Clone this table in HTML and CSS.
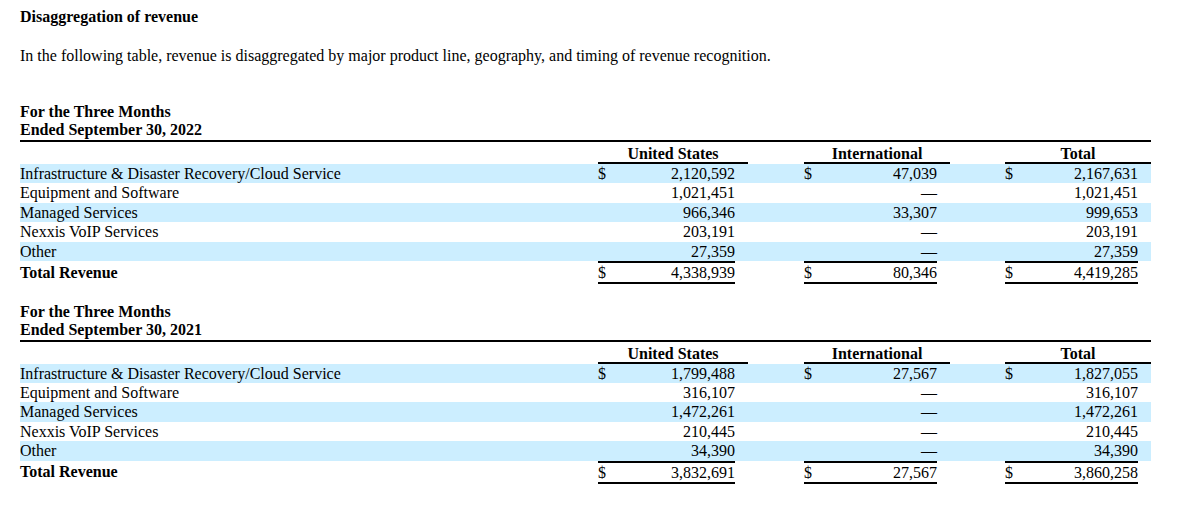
FILE: index.html
```html
<!DOCTYPE html>
<html lang="en">
<head>
<meta charset="utf-8">
<title>Disaggregation of revenue</title>
<link rel="stylesheet" href="styles.css">
</head>
<body>
<div class="page">
  <h1 class="heading">Disaggregation of revenue</h1>
  <p class="intro">In the following table, revenue is disaggregated by major product line, geography, and timing of revenue recognition.</p>

  <section class="period">
    <div class="period-title">For the Three Months<br>Ended September 30, 2022</div>
    <table class="rev">
      <colgroup>
        <col class="c-label"><col class="c-cur"><col class="c-val-us"><col class="c-pad"><col class="c-gap1">
        <col class="c-cur"><col class="c-val"><col class="c-pad"><col class="c-gap2">
        <col class="c-cur"><col class="c-val"><col class="c-pad">
      </colgroup>
      <thead>
        <tr class="head">
          <th></th><th class="grp" colspan="3">United States</th><th></th>
          <th class="grp" colspan="3">International</th><th></th>
          <th class="grp" colspan="3">Total</th>
        </tr>
      </thead>
      <tbody>
        <tr class="hl"><td class="label">Infrastructure &amp; Disaster Recovery/Cloud Service</td><td class="cur">$</td><td class="num">2,120,592</td><td></td><td></td><td class="cur">$</td><td class="num">47,039</td><td></td><td></td><td class="cur">$</td><td class="num">2,167,631</td><td></td></tr>
        <tr><td class="label">Equipment and Software</td><td></td><td class="num">1,021,451</td><td></td><td></td><td></td><td class="num">—</td><td></td><td></td><td></td><td class="num">1,021,451</td><td></td></tr>
        <tr class="hl"><td class="label">Managed Services</td><td></td><td class="num">966,346</td><td></td><td></td><td></td><td class="num">33,307</td><td></td><td></td><td></td><td class="num">999,653</td><td></td></tr>
        <tr><td class="label">Nexxis VoIP Services</td><td></td><td class="num">203,191</td><td></td><td></td><td></td><td class="num">—</td><td></td><td></td><td></td><td class="num">203,191</td><td></td></tr>
        <tr class="hl"><td class="label">Other</td><td></td><td class="num">27,359</td><td></td><td></td><td></td><td class="num">—</td><td></td><td></td><td></td><td class="num">27,359</td><td></td></tr>
        <tr class="total"><td class="label">Total Revenue</td><td class="cur u">$</td><td class="num u">4,338,939</td><td></td><td></td><td class="cur u">$</td><td class="num u">80,346</td><td></td><td></td><td class="cur u">$</td><td class="num u">4,419,285</td><td></td></tr>
      </tbody>
    </table>
  </section>

  <section class="period">
    <div class="period-title">For the Three Months<br>Ended September 30, 2021</div>
    <table class="rev">
      <colgroup>
        <col class="c-label"><col class="c-cur"><col class="c-val-us"><col class="c-pad"><col class="c-gap1">
        <col class="c-cur"><col class="c-val"><col class="c-pad"><col class="c-gap2">
        <col class="c-cur"><col class="c-val"><col class="c-pad">
      </colgroup>
      <thead>
        <tr class="head">
          <th></th><th class="grp" colspan="3">United States</th><th></th>
          <th class="grp" colspan="3">International</th><th></th>
          <th class="grp" colspan="3">Total</th>
        </tr>
      </thead>
      <tbody>
        <tr class="hl"><td class="label">Infrastructure &amp; Disaster Recovery/Cloud Service</td><td class="cur">$</td><td class="num">1,799,488</td><td></td><td></td><td class="cur">$</td><td class="num">27,567</td><td></td><td></td><td class="cur">$</td><td class="num">1,827,055</td><td></td></tr>
        <tr><td class="label">Equipment and Software</td><td></td><td class="num">316,107</td><td></td><td></td><td></td><td class="num">—</td><td></td><td></td><td></td><td class="num">316,107</td><td></td></tr>
        <tr class="hl"><td class="label">Managed Services</td><td></td><td class="num">1,472,261</td><td></td><td></td><td></td><td class="num">—</td><td></td><td></td><td></td><td class="num">1,472,261</td><td></td></tr>
        <tr><td class="label">Nexxis VoIP Services</td><td></td><td class="num">210,445</td><td></td><td></td><td></td><td class="num">—</td><td></td><td></td><td></td><td class="num">210,445</td><td></td></tr>
        <tr class="hl"><td class="label">Other</td><td></td><td class="num">34,390</td><td></td><td></td><td></td><td class="num">—</td><td></td><td></td><td></td><td class="num">34,390</td><td></td></tr>
        <tr class="total"><td class="label">Total Revenue</td><td class="cur u">$</td><td class="num u">3,832,691</td><td></td><td></td><td class="cur u">$</td><td class="num u">27,567</td><td></td><td></td><td class="cur u">$</td><td class="num u">3,860,258</td><td></td></tr>
      </tbody>
    </table>
  </section>
</div>
</body>
</html>
```

FILE: styles.css
```css
html, body {
  margin: 0;
  padding: 0;
  background: #ffffff;
}

body {
  font-family: "Liberation Serif", "Times New Roman", serif;
  font-size: 16px;
  color: #000000;
}

.page {
  padding: 8.4px 0 0 20px;
}

.heading {
  margin: 0;
  font-size: 16px;
  font-weight: bold;
  line-height: 18.4px;
}

.intro {
  margin: 20.2px 0 0;
  line-height: 18.4px;
}

.period {
  width: 1131px;
  margin-top: 36.1px;
}

.period + .period {
  margin-top: 17.3px;
}

.period-title {
  font-weight: bold;
  line-height: 18.4px;
  padding-top: 1.6px;
  border-bottom: 2px solid #000000;
}

.rev {
  width: 1131px;
  table-layout: fixed;
  border-collapse: separate;
  border-spacing: 0;
}

.c-label { width: 578px; }
.c-cur { width: 20px; }
.c-val-us { width: 117px; }
.c-val { width: 113px; }
.c-pad { width: 13px; }
.c-gap1 { width: 56px; }
.c-gap2 { width: 55px; }

.rev th,
.rev td {
  padding: 0;
  white-space: nowrap;
  vertical-align: middle;
}

.rev td {
  line-height: 19.4px;
}

.rev th {
  font-weight: bold;
  text-align: center;
  padding-top: 4.5px;
  line-height: 15.5px;
}

.rev th.grp {
  border-bottom: 2px solid #000000;
}

.rev .label {
  text-align: left;
}

.rev .cur {
  text-align: left;
}

.rev .num {
  text-align: right;
}

.rev tr.hl td {
  background: #cceeff;
}

.rev tr.total .label {
  font-weight: bold;
}

.rev tr.total td.u {
  border-top: 2px solid #000000;
  border-bottom: 2px solid #000000;
  line-height: 19px;
}
```
